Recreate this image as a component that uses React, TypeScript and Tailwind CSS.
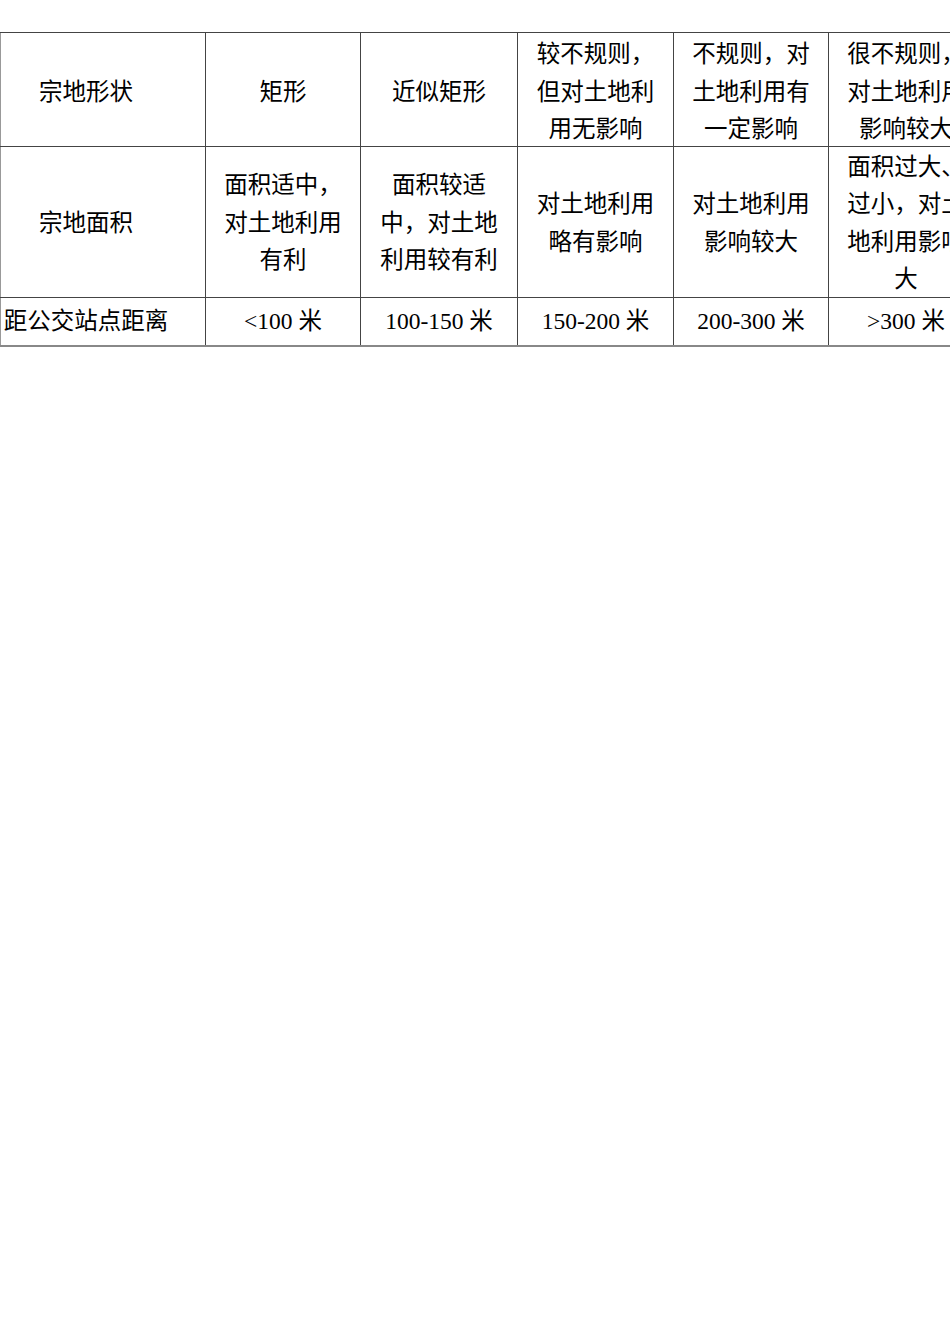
import React from "react";

const cell = "border border-[#444] text-center align-middle p-0 text-black";

export default function App() {
  return (
    <div className="w-[950px] h-[1344px] bg-white overflow-hidden relative">
      <div className="pt-8">
        <table
          className="border-collapse table-fixed w-[983px] text-[23.5px] leading-[37.5px]"
          style={{ fontFamily: '"Liberation Serif", "Noto Sans CJK SC", serif' }}
        >
          <colgroup>
            <col className="w-[205px]" />
            <col className="w-[155px]" />
            <col className="w-[157px]" />
            <col className="w-[156px]" />
            <col className="w-[155px]" />
            <col className="w-[155px]" />
          </colgroup>
          <tbody>
            <tr className="h-[113px]">
              <td className={`${cell} border-l-[#999] pr-[34px]`}>
                <div className="translate-y-[3px]">宗地形状</div>
              </td>
              <td className={cell}>
                <div className="translate-y-[3px]">矩形</div>
              </td>
              <td className={cell}>
                <div className="translate-y-[3px]">近似矩形</div>
              </td>
              <td className={cell}>
                <div className="translate-y-[3px]">
                  较不规则，<br />但对土地利<br />用无影响
                </div>
              </td>
              <td className={cell}>
                <div className="translate-y-[3px]">
                  不规则，对<br />土地利用有<br />一定影响
                </div>
              </td>
              <td className={cell}>
                <div className="translate-y-[3px]">
                  很不规则，<br />对土地利用<br />影响较大
                </div>
              </td>
            </tr>
            <tr className="h-[149px]">
              <td className={`${cell} border-l-[#999] pr-[34px]`}>
                <div className="translate-y-[2px]">宗地面积</div>
              </td>
              <td className={cell}>
                <div className="translate-y-[2px]">
                  面积适中，<br />对土地利用<br />有利
                </div>
              </td>
              <td className={cell}>
                <div className="translate-y-[2px]">
                  面积较适<br />中，对土地<br />利用较有利
                </div>
              </td>
              <td className={cell}>
                <div className="translate-y-[2px]">
                  对土地利用<br />略有影响
                </div>
              </td>
              <td className={cell}>
                <div className="translate-y-[2px]">
                  对土地利用<br />影响较大
                </div>
              </td>
              <td className={cell}>
                <div className="translate-y-[2px]">
                  面积过大、<br />过小，对土<br />地利用影响<br />大
                </div>
              </td>
            </tr>
            <tr className="h-[49px]">
              <td className={`${cell} border-l-[#999] border-b-2 border-b-[#888] pr-[34px] whitespace-nowrap`}>距公交站点距离</td>
              <td className={`${cell} border-b-2 border-b-[#888]`}>&lt;100 米</td>
              <td className={`${cell} border-b-2 border-b-[#888]`}>100-150 米</td>
              <td className={`${cell} border-b-2 border-b-[#888]`}>150-200 米</td>
              <td className={`${cell} border-b-2 border-b-[#888]`}>200-300 米</td>
              <td className={`${cell} border-b-2 border-b-[#888]`}>&gt;300 米</td>
            </tr>
          </tbody>
        </table>
      </div>
    </div>
  );
}
